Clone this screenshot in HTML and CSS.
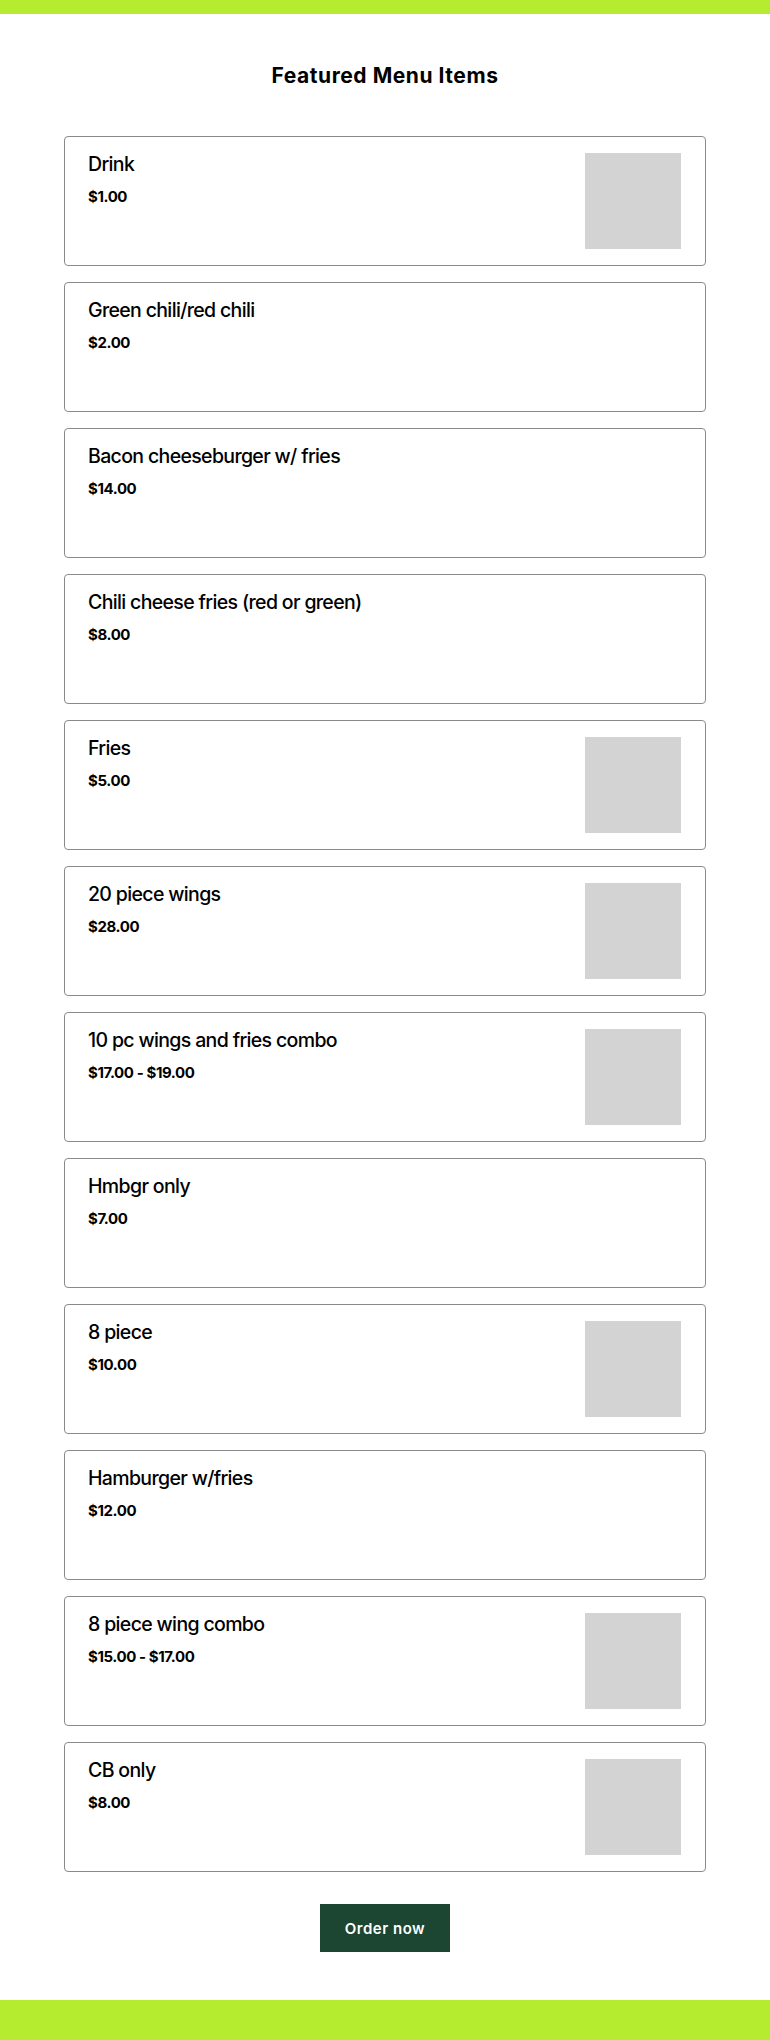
FILE: index.html
```html
<!DOCTYPE html>
<html>
<head>
<meta charset="utf-8">
<link rel="stylesheet" href="styles.css">
</head>
<body>
<div class="topbar"></div>
<main class="menu">
  <h2 class="menu-title">Featured Menu Items</h2>
  <div class="cards">
    <div class="card"><div class="info"><div class="name">Drink</div><div class="price">$1.00</div></div><div class="thumb"></div></div>
    <div class="card"><div class="info"><div class="name">Green chili/red chili</div><div class="price">$2.00</div></div></div>
    <div class="card"><div class="info"><div class="name">Bacon cheeseburger w/ fries</div><div class="price">$14.00</div></div></div>
    <div class="card"><div class="info"><div class="name">Chili cheese fries (red or green)</div><div class="price">$8.00</div></div></div>
    <div class="card"><div class="info"><div class="name">Fries</div><div class="price">$5.00</div></div><div class="thumb"></div></div>
    <div class="card"><div class="info"><div class="name">20 piece wings</div><div class="price">$28.00</div></div><div class="thumb"></div></div>
    <div class="card"><div class="info"><div class="name">10 pc wings and fries combo</div><div class="price">$17.00 - $19.00</div></div><div class="thumb"></div></div>
    <div class="card"><div class="info"><div class="name">Hmbgr only</div><div class="price">$7.00</div></div></div>
    <div class="card"><div class="info"><div class="name">8 piece</div><div class="price">$10.00</div></div><div class="thumb"></div></div>
    <div class="card"><div class="info"><div class="name">Hamburger w/fries</div><div class="price">$12.00</div></div></div>
    <div class="card"><div class="info"><div class="name">8 piece wing combo</div><div class="price">$15.00 - $17.00</div></div><div class="thumb"></div></div>
    <div class="card"><div class="info"><div class="name">CB only</div><div class="price">$8.00</div></div><div class="thumb"></div></div>
  </div>
  <div class="actions"><a class="order-btn">Order now</a></div>
</main>
<footer class="footer"></footer>
</body>
</html>
```
FILE: styles.css
```css
html, body {
  margin: 0;
  padding: 0;
  background: #fff;
  font-family: Inter, "Liberation Sans", sans-serif;
  color: #000;
}
.topbar {
  height: 14px;
  background: #b5ec2f;
}
.menu {
  padding: 0 64px;
}
.menu-title {
  margin: 0;
  padding: 47px 0 0;
  height: 76px;
  box-sizing: border-box;
  text-align: center;
  font-size: 21px;
  line-height: 30px;
  font-weight: 700;
  letter-spacing: 0.55px;
}
.cards {
  margin-top: 46px;
  display: flex;
  flex-direction: column;
  gap: 16px;
}
.card {
  border: 1px solid #8a8a8a;
  border-radius: 4px;
  height: 130px;
  box-sizing: border-box;
  padding: 16px 24px 16px 23px;
  display: flex;
  justify-content: space-between;
  align-items: flex-start;
}
.info {
  display: flex;
  flex-direction: column;
}
.name {
  font-size: 19.5px;
  line-height: 22px;
  font-weight: 550;
  letter-spacing: -0.65px;
}
.price {
  margin-top: 12px;
  font-size: 15px;
  line-height: 20px;
  font-weight: 700;
  letter-spacing: -0.4px;
}
.thumb {
  width: 96px;
  height: 96px;
  background: #d3d3d3;
  flex: none;
}
.actions {
  display: flex;
  justify-content: center;
  padding: 32px 0 48px;
}
.order-btn {
  display: flex;
  align-items: center;
  justify-content: center;
  width: 130px;
  height: 48px;
  background: #1c4532;
  color: #fff;
  font-size: 15px;
  font-weight: 600;
  letter-spacing: 0.5px;
}
.footer {
  height: 40px;
  background: #b5ec2f;
}
```
